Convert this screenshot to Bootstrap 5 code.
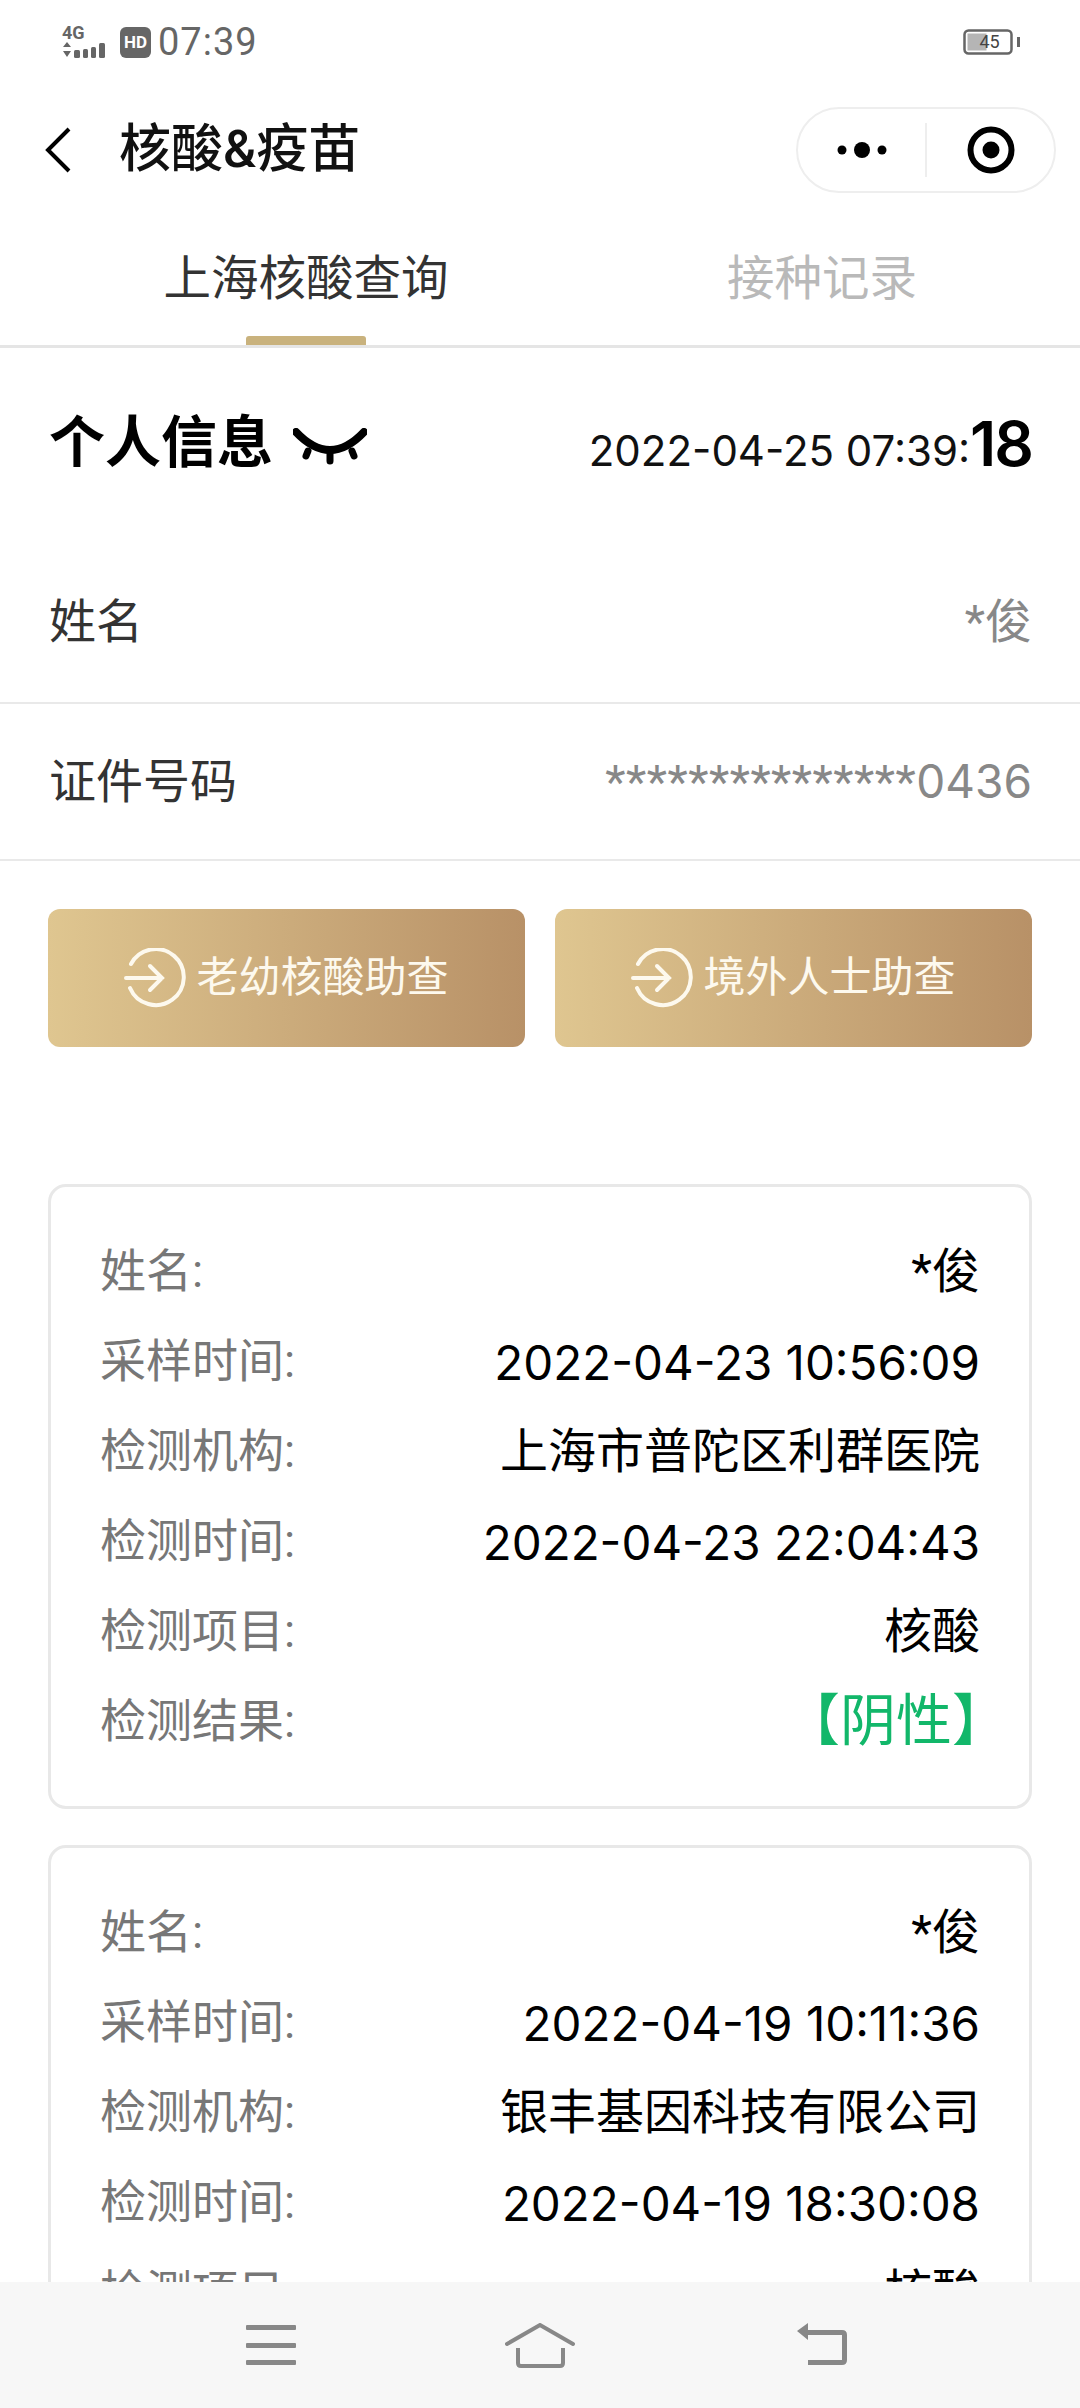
<!DOCTYPE html>
<html lang="zh-CN">
<head>
  <meta charset="UTF-8">
  <title>核酸&amp;疫苗</title>
  <link href="https://cdn.jsdelivr.net/npm/bootstrap@5.3.0/dist/css/bootstrap.min.css" rel="stylesheet">
  <style>
    html, body { height: 2408px; overflow: hidden; }
    body { font-family: Roboto, "Noto Sans CJK SC", sans-serif; color: #000; background: #fff; }
    .app-shell { height: 2408px; }
    .status-row { height: 84px; padding: 0 52px 0 62px; color: #666; }
    .status-time { font-size: 38px; line-height: 1; letter-spacing: 1px; margin-left: 7px; }
    .net-mark { width: 50px; height: 36px; }
    .net-label { font-size: 18px; font-weight: 700; line-height: 17px; }
    .hd-chip { width: 31px; height: 31px; border-radius: 6px; background: #666; color: #fff; font-size: 17px; font-weight: 700; line-height: 31px; text-align: center; margin-left: 8px; }
    .batt-box { width: 50px; height: 26px; position: relative; }
    .batt-box span { position: absolute; left: 11px; right: 0; top: 0; font-size: 18px; line-height: 26px; color: #444; text-align: center; padding-right: 8px; }
    .title-row { height: 132px; padding: 0 24px 0 44px; }
    .title-text { font-size: 52px; line-height: 1.2; margin-left: 47px; font-weight: 500; color: #111; }
    .capsule-box { width: 260px; height: 86px; border: 2px solid #eee; border-radius: 43px; }
    .capsule-box > div { flex: 1 1 0; }
    .capsule-line { flex: 0 0 2px !important; height: 54px; background: #eee; }
    .tab-row { height: 132px; border-bottom: 3px solid #e5e5e5; }
    .tab-cell { width: 516px; height: 129px; position: relative; font-size: 47.5px; line-height: 1.2; color: #333; padding-bottom: 2px; }
    .tab-cell.tab-off { color: #b9b9b9; }
    .tab-cell.tab-on::after { content: ""; position: absolute; left: 50%; bottom: 0; width: 120px; height: 9px; margin-left: -60px; border-radius: 3px 3px 0 0; background: #c9b27d; }
    .tab-wrap { padding-left: 48px; }
    .scroll-area { min-height: 0; overflow: hidden; }
    .info-head { height: 192px; padding: 0 48px 0 49px; }
    .info-title { font-size: 56px; font-weight: 700; line-height: 1.2; }
    .eye-mark { margin: 8px 0 0 20px; }
    .clock-text { font-family: Inter, sans-serif; font-size: 42px; line-height: 1.2; color: #111; }
    .clock-text b { font-size: 62px; font-weight: 600; color: #000; letter-spacing: -2px; }
    .person-row { height: 157px; padding: 2px 48px 0 49px; border-bottom: 2px solid #e9e9e9; font-size: 47px; color: #333; }
    .person-row.first-row { height: 164px; }
    .person-row .person-val { color: #888; }
    .mask-stars { letter-spacing: .5px; }
    .mask-digits { font-family: Inter, sans-serif; font-size: 46px; }
    .gold-row { padding: 48px 48px 0; gap: 30px; }
    .gold-btn { flex: 1 1 0; height: 138px; border: 0; border-radius: 12px; background: linear-gradient(90deg, #dfc690, #b89167); color: #fdf9ee; font-size: 42px; line-height: 1.2; gap: 10px; }
    .rec-list { padding: 137px 48px 0; gap: 36px; }
    .rec-card { border: 3px solid #e8e8e8; border-radius: 18px; padding: 40px 49px 39px; }
    .rec-line { height: 90px; line-height: 1.2; }
    .rec-key { color: #777; font-size: 46px; }
    .rec-val { color: #000; font-size: 48px; }
    .rec-num { font-family: Inter, sans-serif; color: #000; font-size: 47.5px; }
    .result-ok { color: #12b76a; font-size: 56px; margin-right: -28px; }
    .nav-bar { height: 126px; background: #f7f7f7; flex: 0 0 126px; position: relative; z-index: 2; }
    .nav-slot { position: absolute; top: 41px; }
  </style>
</head>
<body>
<div class="app-shell d-flex flex-column">
  <div class="status-row d-flex align-items-center justify-content-between flex-shrink-0">
    <div class="d-flex align-items-center">
      <div class="net-mark d-flex flex-column">
        <div class="net-label">4G</div>
        <svg width="50" height="19" viewBox="0 0 50 19" fill="#666">
          <path d="M5 1l4 5H1zM1 10h8l-4 6z"/>
          <rect x="12" y="9" width="6" height="8" rx="1.5"/>
          <rect x="21" y="8" width="5" height="9" rx="1.5"/>
          <rect x="29" y="6" width="5" height="11" rx="1.5"/>
          <rect x="37" y="2" width="6" height="15" rx="1.5"/>
        </svg>
      </div>
      <div class="hd-chip">HD</div>
      <div class="status-time">07:39</div>
    </div>
    <div class="d-flex align-items-center me-2">
      <div class="batt-box">
        <svg width="50" height="26" viewBox="0 0 50 26">
          <rect x="1.5" y="1.5" width="47" height="23" rx="4" fill="#fff" stroke="#666" stroke-width="2.5"/>
          <rect x="4.5" y="4.5" width="19" height="17" fill="#b5b5b5"/>
        </svg>
        <span>45</span>
      </div>
      <svg class="ms-1" width="3" height="10" viewBox="0 0 3 10"><rect width="3" height="10" fill="#666"/></svg>
    </div>
  </div>

  <div class="title-row d-flex align-items-center justify-content-between flex-shrink-0">
    <div class="d-flex align-items-center">
      <svg width="28" height="46" viewBox="0 0 28 46" fill="none" stroke="#000" stroke-width="4"><path d="M25 2 4 23l21 21"/></svg>
      <div class="title-text">核酸&amp;疫苗</div>
    </div>
    <div class="capsule-box d-flex align-items-center">
      <div class="d-flex justify-content-center">
        <svg width="52" height="18" viewBox="0 0 52 18" fill="#000"><circle cx="6" cy="9" r="4.5"/><circle cx="26" cy="9" r="8"/><circle cx="46" cy="9" r="4.5"/></svg>
      </div>
      <div class="capsule-line"></div>
      <div class="d-flex justify-content-center">
        <svg width="48" height="48" viewBox="0 0 48 48"><circle cx="24" cy="24" r="20.5" fill="none" stroke="#000" stroke-width="6"/><circle cx="24" cy="24" r="8.5" fill="#000"/></svg>
      </div>
    </div>
  </div>

  <div class="tab-row tab-wrap d-flex flex-shrink-0">
    <div class="tab-cell tab-on d-flex align-items-center justify-content-center">上海核酸查询</div>
    <div class="tab-cell tab-off d-flex align-items-center justify-content-center">接种记录</div>
  </div>

  <div class="scroll-area flex-grow-1">
    <div class="info-head d-flex align-items-center justify-content-between">
      <div class="d-flex align-items-center">
        <div class="info-title">个人信息</div>
        <svg class="eye-mark" width="74" height="40" viewBox="0 0 74 40" fill="none" stroke="#000" stroke-linecap="round" stroke-width="7"><path d="M3 4Q37 40 71 4" stroke-width="8"/><path d="M15 23l-2 5M37 24v9M59 23l2 5"/></svg>
      </div>
      <div class="clock-text">2022-04-25 07:39:<b>18</b></div>
    </div>

    <div class="person-row first-row d-flex align-items-center justify-content-between">
      <span>姓名</span><span class="person-val">*俊</span>
    </div>
    <div class="person-row d-flex align-items-center justify-content-between">
      <span>证件号码</span><span class="person-val"><span class="mask-stars">***************</span><span class="mask-digits">0436</span></span>
    </div>

    <div class="gold-row d-flex">
      <button type="button" class="btn gold-btn d-flex align-items-center justify-content-center">
        <svg width="62" height="60" viewBox="0 0 62 60" fill="none" stroke="#fdf9ee" stroke-width="4" stroke-linecap="round"><path d="M7 16A28 28 0 1 1 6 40"/><path d="M2 30h36M26 18l12 12-12 12"/></svg>
        <span>老幼核酸助查</span>
      </button>
      <button type="button" class="btn gold-btn d-flex align-items-center justify-content-center">
        <svg width="62" height="60" viewBox="0 0 62 60" fill="none" stroke="#fdf9ee" stroke-width="4" stroke-linecap="round"><path d="M7 16A28 28 0 1 1 6 40"/><path d="M2 30h36M26 18l12 12-12 12"/></svg>
        <span>境外人士助查</span>
      </button>
    </div>

    <div class="rec-list d-flex flex-column">
      <div class="rec-card">
        <div class="rec-line d-flex align-items-center justify-content-between"><span class="rec-key">姓名:</span><span class="rec-val">*俊</span></div>
        <div class="rec-line d-flex align-items-center justify-content-between"><span class="rec-key">采样时间:</span><span class="rec-num">2022-04-23 10:56:09</span></div>
        <div class="rec-line d-flex align-items-center justify-content-between"><span class="rec-key">检测机构:</span><span class="rec-val">上海市普陀区利群医院</span></div>
        <div class="rec-line d-flex align-items-center justify-content-between"><span class="rec-key">检测时间:</span><span class="rec-num">2022-04-23 22:04:43</span></div>
        <div class="rec-line d-flex align-items-center justify-content-between"><span class="rec-key">检测项目:</span><span class="rec-val">核酸</span></div>
        <div class="rec-line d-flex align-items-center justify-content-between"><span class="rec-key">检测结果:</span><span class="result-ok">【阴性】</span></div>
      </div>
      <div class="rec-card">
        <div class="rec-line d-flex align-items-center justify-content-between"><span class="rec-key">姓名:</span><span class="rec-val">*俊</span></div>
        <div class="rec-line d-flex align-items-center justify-content-between"><span class="rec-key">采样时间:</span><span class="rec-num">2022-04-19 10:11:36</span></div>
        <div class="rec-line d-flex align-items-center justify-content-between"><span class="rec-key">检测机构:</span><span class="rec-val">银丰基因科技有限公司</span></div>
        <div class="rec-line d-flex align-items-center justify-content-between"><span class="rec-key">检测时间:</span><span class="rec-num">2022-04-19 18:30:08</span></div>
        <div class="rec-line d-flex align-items-center justify-content-between"><span class="rec-key">检测项目:</span><span class="rec-val">核酸</span></div>
      </div>
    </div>
  </div>

  <div class="nav-bar">
    <svg class="nav-slot" style="left:246px" width="50" height="44" viewBox="0 0 50 44" fill="#888"><rect y="2" width="50" height="5" rx="1"/><rect y="20" width="50" height="5" rx="1"/><rect y="37" width="50" height="5" rx="1"/></svg>
    <svg class="nav-slot" style="left:505px" width="72" height="46" viewBox="0 0 72 46" fill="none" stroke="#888" stroke-width="4"><path d="M2 21 35 2l33 19" stroke-linecap="round"/><path d="M13 25v15q0 3 3 3h39q3 0 3-3V25"/></svg>
    <svg class="nav-slot" style="left:797px" width="54" height="44" viewBox="0 0 54 44" fill="#888"><path d="M11 0v7h34q5 0 5 5v25q0 5-5 5H11v-5h34V12H11v5L0 8z"/></svg>
  </div>
</div>
<script src="https://cdn.jsdelivr.net/npm/bootstrap@5.3.0/dist/js/bootstrap.bundle.min.js"></script>
</body>
</html>
